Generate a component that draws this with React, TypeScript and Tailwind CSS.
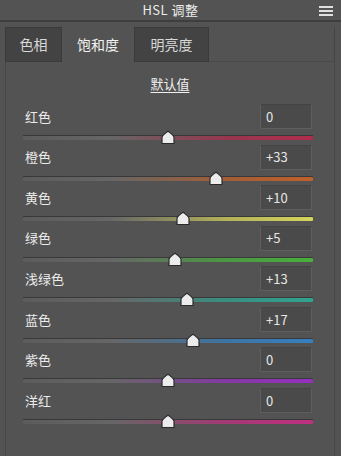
import React from "react";

const rows = [
  { label: "红色", value: "0", v: 0, color: "#b02c4c" },
  { label: "橙色", value: "+33", v: 33, color: "#c0602c" },
  { label: "黄色", value: "+10", v: 10, color: "#d6d45c" },
  { label: "绿色", value: "+5", v: 5, color: "#48b03c" },
  { label: "浅绿色", value: "+13", v: 13, color: "#2fa490" },
  { label: "蓝色", value: "+17", v: 17, color: "#3680c0" },
  { label: "紫色", value: "0", v: 0, color: "#9530c0" },
  { label: "洋红", value: "0", v: 0, color: "#c03080" },
];

function Thumb() {
  return (
    <svg width="15" height="15" viewBox="0 0 15 15">
      <path d="M1.5 13.5 L1.5 7 Q2.5 4.5 7.5 1.2 Q12.5 4.5 13.5 7 L13.5 13.5 Z" fill="#ececec" stroke="#2a2a2a" strokeWidth="1.2" />
    </svg>
  );
}

function Row({ label, value, v, color }: { label: string; value: string; v: number; color: string }) {
  const pct = 50 + v / 2;
  return (
    <div className="flex flex-col h-[40.57px]">
      <div className="flex items-center h-[25px] pl-[25px] pr-[23px]">
        <span className="text-[13px] text-[#ececec] flex-1">{label}</span>
        <div className="w-[52px] h-[25px] bg-[#4a4a4a] border border-[#5e5e5e] border-t-[#444] flex items-center pl-[5px] text-[13px] text-[#e6e6e6]">
          {value}
        </div>
      </div>
      <div className="relative h-[15px] ml-[23px] mr-[22px]">
        <div className="absolute left-0 right-0 top-[6px] h-[1px] bg-[#383838]" />
        <div
          className="absolute left-0 right-0 top-[7px] h-[4px] rounded-[1px]"
          style={{ background: `linear-gradient(to right, #5c5c5c 0%, #666 30%, ${color}bb 70%, ${color} 100%)` }}
        />
        <div className="absolute top-[1px] -translate-x-1/2" style={{ left: `${pct}%` }}>
          <Thumb />
        </div>
      </div>
    </div>
  );
}

export default function App() {
  return (
    <div
      className="w-[341px] h-[456px] bg-[#535353] overflow-hidden relative"
      style={{ fontFamily: '"Noto Sans CJK SC", "Noto Sans", sans-serif' }}
    >
      <div className="h-[22px] flex items-center justify-center relative border-b-2 border-[#3e3e3e]">
        <span className="text-[13px] text-[#ececec] tracking-[0.5px]">HSL 调整</span>
        <div className="absolute right-[8px] top-[6px] flex flex-col gap-[2px]">
          <div className="w-[14px] h-[2px] bg-[#e0e0e0]" />
          <div className="w-[14px] h-[2px] bg-[#e0e0e0]" />
          <div className="w-[14px] h-[2px] bg-[#e0e0e0]" />
        </div>
      </div>
      <div className="flex mt-[5px] mx-[5px] mr-[6px] h-[35px] border-r border-[#444]">
        <div className="w-[57px] bg-[#434343] border border-[#3a3a3a] flex items-center justify-center text-[14px] text-[#d8d8d8]">色相</div>
        <div className="w-[72px] bg-[#535353] flex items-center justify-center text-[14px] text-[#f2f2f2]">饱和度</div>
        <div className="w-[75px] bg-[#434343] border border-[#3a3a3a] flex items-center justify-center text-[14px] text-[#d8d8d8]">明亮度</div>
        <div className="flex-1 border-b border-[#4a4a4a]" />
      </div>
      <div className="mx-[5px] mr-[6px] border-l border-r border-[#474747] h-[395px] flex flex-col">
        <div className="flex justify-center pt-[12px] h-[42px]">
          <span className="text-[13px] text-[#f0f0f0] underline underline-offset-[3px]">默认值</span>
        </div>
        <div className="flex flex-col -ml-[6px] -mr-[1px]">
          {rows.map((r) => (
            <Row key={r.label} {...r} />
          ))}
        </div>
      </div>
    </div>
  );
}
